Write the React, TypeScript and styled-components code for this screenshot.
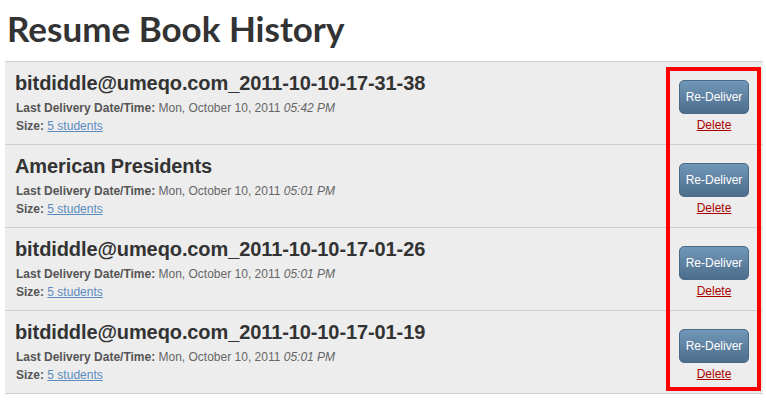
import React from "react";
import styled, { createGlobalStyle } from "styled-components";

type Book = {
  name: string;
  date: string;
  time: string;
  size: string;
};

const books: Book[] = [
  { name: "bitdiddle@umeqo.com_2011-10-10-17-31-38", date: "Mon, October 10, 2011", time: "05:42 PM", size: "5 students" },
  { name: "American Presidents", date: "Mon, October 10, 2011", time: "05:01 PM", size: "5 students" },
  { name: "bitdiddle@umeqo.com_2011-10-10-17-01-26", date: "Mon, October 10, 2011", time: "05:01 PM", size: "5 students" },
  { name: "bitdiddle@umeqo.com_2011-10-10-17-01-19", date: "Mon, October 10, 2011", time: "05:01 PM", size: "5 students" },
];

const App: React.FC = () => {
  return (
    <Page>
      <GlobalStyle />
      <Title>Resume Book History</Title>
      <List>
        {books.map((book, i) => (
          <Row key={i}>
            <Info>
              <Name>{book.name}</Name>
              <Meta>
                <b>Last Delivery Date/Time:</b> {book.date} <i>{book.time}</i>
              </Meta>
              <Meta>
                <b>Size:</b> <SizeLink href="#">{book.size}</SizeLink>
              </Meta>
            </Info>
            <Actions>
              <Button>Re-Deliver</Button>
              <DeleteLink href="#">Delete</DeleteLink>
            </Actions>
          </Row>
        ))}
        <Highlight />
      </List>
    </Page>
  );
};

export default App;

const GlobalStyle = createGlobalStyle`
  html, body {
    margin: 0;
    padding: 0;
    background: #ffffff;
  }
`;

const Page = styled.div`
  width: 766px;
  height: 400px;
  overflow: hidden;
  padding: 0 3px 0 5px;
  box-sizing: border-box;
`;

const Title = styled.h1`
  font-family: Lato, "Open Sans", sans-serif;
  font-weight: 700;
  font-size: 35px;
  color: #333333;
  margin: 0;
  padding: 6px 0 0 2px;
  height: 61px;
  line-height: 44px;
  box-sizing: border-box;
`;

const List = styled.div`
  position: relative;
  border-top: 1px solid #cfcfcf;
  background: #ededed;
`;

const Row = styled.div`
  display: flex;
  justify-content: space-between;
  border-bottom: 1px solid #cfcfcf;
  padding: 0 14px 0 10px;
  box-sizing: border-box;
  height: 83px;
`;

const Info = styled.div`
  display: flex;
  flex-direction: column;
  padding-top: 8px;
  font-family: "Liberation Sans", Arial, sans-serif;
`;

const Name = styled.div`
  font-size: 20px;
  font-weight: 700;
  color: #333333;
  line-height: 26px;
  margin-bottom: 3px;
  letter-spacing: -0.1px;
`;

const Meta = styled.div`
  font-size: 12px;
  color: #666666;
  line-height: 18px;
  padding-left: 1px;

  b {
    color: #555555;
  }
`;

const SizeLink = styled.a`
  color: #5b8cc0;
  text-decoration: underline;
`;

const Actions = styled.div`
  display: flex;
  flex-direction: column;
  align-items: center;
  padding-top: 18px;
  font-family: "Liberation Sans", Arial, sans-serif;
`;

const Button = styled.button`
  width: 70px;
  height: 34px;
  border: 1px solid #4b6a86;
  border-radius: 5px;
  background: linear-gradient(#7097b8, #4d6d8c);
  color: #ffffff;
  font-family: "Liberation Sans", Arial, sans-serif;
  font-size: 12px;
  padding: 0;
  cursor: pointer;
`;

const DeleteLink = styled.a`
  margin-top: 4px;
  font-size: 12px;
  color: #aa0000;
  text-decoration: underline;
`;

const Highlight = styled.div`
  position: absolute;
  top: 5px;
  right: 2px;
  width: 95px;
  height: 324px;
  border: 4px solid #ff0000;
  box-sizing: border-box;
  pointer-events: none;
`;
